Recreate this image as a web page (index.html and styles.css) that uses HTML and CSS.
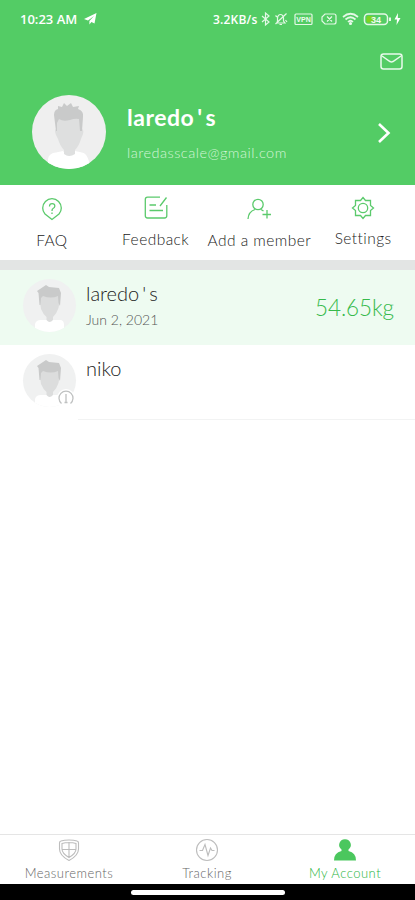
FILE: index.html
```html
<!DOCTYPE html>
<html lang="en">

<head>
    <meta charset="UTF-8">
    <meta name="viewport" content="width=device-width, initial-scale=1.0">
    <title>My Account</title>
    <link rel="stylesheet" href="styles.css">
</head>

<body>
    <!-- avatar drawings, large and small -->
    <svg class="defs" width="0" height="0">
        <symbol id="face" viewBox="0 0 74 74">
            <path fill="#fff" d="M16 74V64Q17 58 24 57.500L31 56Q37 65 43 56L50 57.500Q57 59 58 74Z"/>
            <path fill="#dedfdf" d="M24 34Q22 35 24 40L26 44Q28 51 32 55V59Q37 63 43 59V55Q47 51 49 44L51 39Q52 35 50 34V20H24Z"/>
            <path fill="#c9caca" d="M24 36L22 20Q22 15 26 14V11L30 12L32 8L35 11L39 8L41 12L47 11L46 14Q52 16 51 22L50 36H48L47 24Q43 23 38 25Q31 27 27 24L25 28V36Z"/>
        </symbol>
        <symbol id="face-small" viewBox="0 0 53 53">
            <path fill="#fff" d="M12 53V45Q13 41 18 41H37Q41 41 41 46V53Z"/>
            <path fill="#dcdddd" d="M17 23L18 30Q20 35 23.500 38V41Q26.500 45 30 41V38Q34 34 35.500 29L36.500 23V15H17Z"/>
            <path fill="#c9caca" d="M16.500 26L15.500 14L14 12L23 6L26 8L36 9L38 14L37 27L35.500 24L35 17Q28 20 20 17L18 19L17.500 26Z"/>
        </symbol>
    </svg>

    <div class="header">
        <div class="status">
            <span class="time">10:23 AM</span>
            <svg class="plane" width="13" height="12" viewBox="0 0 13 12"><path fill="#fff" d="M12.500 0L0 6L4 7.400L10 3L5.400 8V11.500L7.400 9L10.500 10.500Z"/></svg>
            <span class="speed">3.2KB/s</span>
            <svg class="icons" width="142" height="16" viewBox="0 0 142 16" fill="none" stroke="#e4f8e6" stroke-width="1.2">
                <path d="M1 5L8 11L4.500 14V2L8 5L1 11"/>
                <path d="M16 12H24L22.500 10V7Q22 3.500 19.500 3.500T16.500 7V10ZM18.500 13.500H21M14.500 13L25.500 2.500M14.500 4.500L16 6M24.500 9L26 11"/>
                <rect x="34" y="3" width="17" height="10.500" rx="1"/>
                <path d="M64 3H73Q75 3 75 5V11Q75 13 73 13H64L61 10V6ZM66 5.500L71 10.500M71 5.500L66 10.500"/>
                <path d="M82 6Q89.500 -0.500 97 6M84.500 8.500Q89.500 4 94.500 8.500M87 11Q89.500 8.500 92 11" stroke-width="1.700"/>
                <circle cx="89.500" cy="12.500" r="1" fill="#fff"/>
                <rect x="103.500" y="3" width="23" height="10.500" rx="3.500" stroke-width="1.500"/>
                <rect x="105.500" y="5" width="7" height="6.500" rx="1.500" fill="#7ed321" stroke="none"/>
                <path d="M129 6.500V10" stroke-width="2"/>
                <path d="M137 2L133.500 8.500H136L135.500 14L139.500 7H136.800Z" fill="#fff" stroke="none"/>
                <text class="vpn" x="42.500" y="11">VPN</text>
                <text class="battery" x="115" y="11.500">34</text>
            </svg>
        </div>
        <div class="mail">
            <svg width="23" height="17" viewBox="0 0 23 17" fill="none" stroke="#e9faeb" stroke-width="1.500"><rect x="1" y="1" width="21" height="15" rx="2.500"/><path d="M2 3L10 8.500Q11.500 9.300 13 8.500L21 3"/></svg>
        </div>
        <div class="profile">
            <svg class="avatar" width="74" height="74"><use href="#face"/></svg>
            <div class="info">
                <h1>laredo<span class="apos">'</span>s</h1>
                <p>laredasscale@gmail.com</p>
            </div>
            <svg class="arrow" width="14" height="22" viewBox="0 0 14 22" fill="none" stroke="#fff" stroke-width="2.600"><path d="M2 2L11.500 11L2 20"/></svg>
        </div>
    </div>

    <div class="menu">
        <div class="item faq">
            <svg width="24" height="24" viewBox="0 0 24 24"><path d="M12 22.500L5 17Q2.700 14.500 2.700 11A9.300 9.300 0 0 1 21.300 11Q21.300 14.500 19 17Z"/><path d="M9.500 9.500Q9.500 6.700 12.200 6.700T14.800 9.200Q14.800 10.500 13 11.500Q12 12 12 14M12 15.500V17"/></svg>
            <span>FAQ</span>
        </div>
        <div class="item feedback">
            <svg width="24" height="24" viewBox="0 0 24 24"><path d="M16 1.200H3.500Q1.300 1.200 1.300 3.500V19.500Q1.300 22 3.500 22H20.500Q22.800 22 22.800 19.500V9M5.500 9H12M5.500 14.500H19M16 10L22.500 1.500"/></svg>
            <span>Feedback</span>
        </div>
        <div class="item member">
            <svg width="24" height="24" viewBox="0 0 24 24"><circle cx="11" cy="7.500" r="5.200"/><path d="M1 22Q1.500 14.500 8 12.500M14 12.500L16.500 14M20 13V21.500M15.500 17.500H24"/></svg>
            <span>Add a member</span>
        </div>
        <div class="item settings">
            <svg width="24" height="24" viewBox="0 0 24 24"><path d="M12 1.500L14.500 4.500L19.500 4.500V9.500L22.500 12L19.500 14.500V19.500H14.500L12 22.500L9.500 19.500H4.500V14.500L1.500 12L4.500 9.500V4.500H9.500Z"/><circle cx="12" cy="12" r="4.700"/></svg>
            <span>Settings</span>
        </div>
    </div>

    <div class="list">
        <div class="row selected">
            <svg class="avatar" width="53" height="53"><use href="#face-small"/></svg>
            <div class="text">
                <h2>laredo<span class="apos">'</span>s</h2>
                <p>Jun 2, 2021</p>
            </div>
            <span class="weight">54.65kg</span>
        </div>
        <div class="row">
            <div class="pic">
                <svg class="avatar" width="53" height="53"><use href="#face-small"/></svg>
                <svg class="badge" width="18" height="18" viewBox="0 0 18 18"><circle cx="9" cy="9" r="9" fill="#fff"/><path d="M4.500 14.500A7 7 0 1 1 13.500 14.500M9 5V14M7.500 13.500H10.500" fill="none" stroke="#bfc1c1" stroke-width="1.300"/></svg>
            </div>
            <div class="text">
                <h2>niko</h2>
            </div>
        </div>
    </div>

    <div class="tabs">
        <div class="tab measurements">
            <svg width="24" height="24" viewBox="0 0 24 24"><path d="M12 2Q17 2 20 3Q21.500 3.300 21.500 5V11Q21.500 17.500 12 22.500Q2.500 17.500 2.500 11V5Q2.500 3.300 4 3Q7 2 12 2Z"/><path d="M12 4.500Q16 4.500 19 5.500V11Q19 15.500 12 19.500Q5 15.500 5 11V5.500Q8 4.500 12 4.500ZM12 4V20M5 11.500H19"/></svg>
            <span>Measurements</span>
        </div>
        <div class="tab tracking">
            <svg width="24" height="24" viewBox="0 0 24 24"><circle cx="12" cy="12" r="10.500"/><path d="M4.500 12.500H7.500L10 6.500L13 17.500L15.500 10L17 12.500H19.500"/></svg>
            <span>Tracking</span>
        </div>
        <div class="tab account">
            <svg width="24" height="24" viewBox="0 0 24 24"><path d="M12 1.200A5.700 5.700 0 0 1 15.500 11.500V13Q23 14.500 23 22.500H1Q1 14.500 8.500 13V11.500A5.700 5.700 0 0 1 12 1.200Z"/></svg>
            <span>My Account</span>
        </div>
    </div>
    <div class="home"><div class="bar"></div></div>
</body>

</html>
```
FILE: styles.css
```css
* {
    margin: 0;
    padding: 0;
    box-sizing: border-box;
}
body {
    width: 415px;
    height: 900px;
    display: flex;
    flex-direction: column;
    background-color: #fff;
    font-family: Lato, "Liberation Sans", sans-serif;
    font-weight: 300;
    overflow: hidden;
}
svg {
    display: block;
    flex-shrink: 0;
}
.defs {
    position: absolute;
}
.header {
    height: 185px;
    background-color: #53cc65;
    color: #fff;
}
.status {
    display: flex;
    align-items: center;
    height: 38px;
    padding-left: 20px;
}
.time {
    width: 64px;
    font: 600 13px "Open Sans", sans-serif;
    white-space: nowrap;
}
.speed {
    width: 48px;
    margin-left: 116px;
    font: 600 12px "Open Sans", sans-serif;
    letter-spacing: 0.2px;
    white-space: nowrap;
}
.vpn,
.battery {
    fill: #f0fcf0;
    stroke: none;
    text-anchor: middle;
    font: bold 7px "Liberation Sans", sans-serif;
}
.battery {
    font-size: 9px;
}
.mail {
    display: flex;
    justify-content: flex-end;
    padding: 15px 12px 0 0;
}
.profile {
    display: flex;
    height: 74px;
    margin-top: 25px;
    padding: 0 24px 0 32px;
}
.avatar {
    border-radius: 50%;
    background-color: #efefef;
}
.info {
    flex: 1;
    margin-left: 21px;
}
h1 {
    margin-top: 7px;
    font-size: 23px;
    line-height: 30px;
    letter-spacing: 0.5px;
}
.apos {
    margin: 0 3px;
}
.info p {
    margin-top: 12px;
    font-size: 14.5px;
    line-height: 18px;
    letter-spacing: 0.5px;
    color: #d4f5d8;
}
.arrow {
    margin-top: 27px;
}
.menu {
    display: flex;
    height: 85px;
    border-bottom: 10px solid #e3e5e4;
    color: #222;
}
.item {
    width: 104px;
    display: flex;
    flex-direction: column;
    align-items: center;
    padding-top: 12px;
}
.item svg {
    fill: none;
    stroke: #5bca6c;
    stroke-width: 1.3;
}
.item span {
    margin-top: 9px;
    font-size: 15.5px;
    line-height: 20px;
    letter-spacing: 0.45px;
    white-space: nowrap;
}
.feedback,
.settings {
    padding-top: 11px;
}
.settings span {
    margin-top: 8px;
}
.list {
    flex: 1;
}
.row {
    display: flex;
    height: 75px;
    padding: 9px 21px 0 23px;
}
.row .avatar {
    background-color: #f0f1f1;
}
.selected {
    background-color: #eefbf1;
}
.pic {
    position: relative;
    height: 53px;
}
.badge {
    position: absolute;
    right: 1px;
    bottom: 0;
}
.text {
    flex: 1;
    margin-left: 10px;
}
h2 {
    margin-top: 2px;
    font-size: 20px;
    font-weight: 300;
    line-height: 24px;
    color: #222;
}
.text p {
    margin-top: 6px;
    font-size: 14px;
    line-height: 18px;
    color: #555;
}
.weight {
    margin-top: 14px;
    font-size: 22.5px;
    line-height: 30px;
    letter-spacing: -0.1px;
    color: #36ba4b;
}
.list::after {
    content: "";
    display: block;
    height: 1px;
    margin: -1px 0 0 78px;
    background-color: #f2f3f3;
}
.tabs {
    display: flex;
    height: 50px;
    border-top: 1px solid #e5e5e5;
    color: #666;
}
.tab {
    width: 138px;
    display: flex;
    flex-direction: column;
    align-items: center;
    padding-top: 3px;
}
.tab svg {
    fill: none;
    stroke: #bdbdbd;
    stroke-width: 1.1;
}
.tab span {
    margin-top: 3px;
    font-size: 13px;
    line-height: 16px;
    letter-spacing: 0.5px;
}
.account {
    color: #2cb542;
}
.account svg {
    fill: #4bc75e;
    stroke: none;
}
.home {
    height: 16px;
    padding-top: 6px;
    background-color: #000;
}
.bar {
    width: 154px;
    height: 5px;
    margin: 0 auto;
    border-radius: 3px;
    background-color: #fff;
}
```
